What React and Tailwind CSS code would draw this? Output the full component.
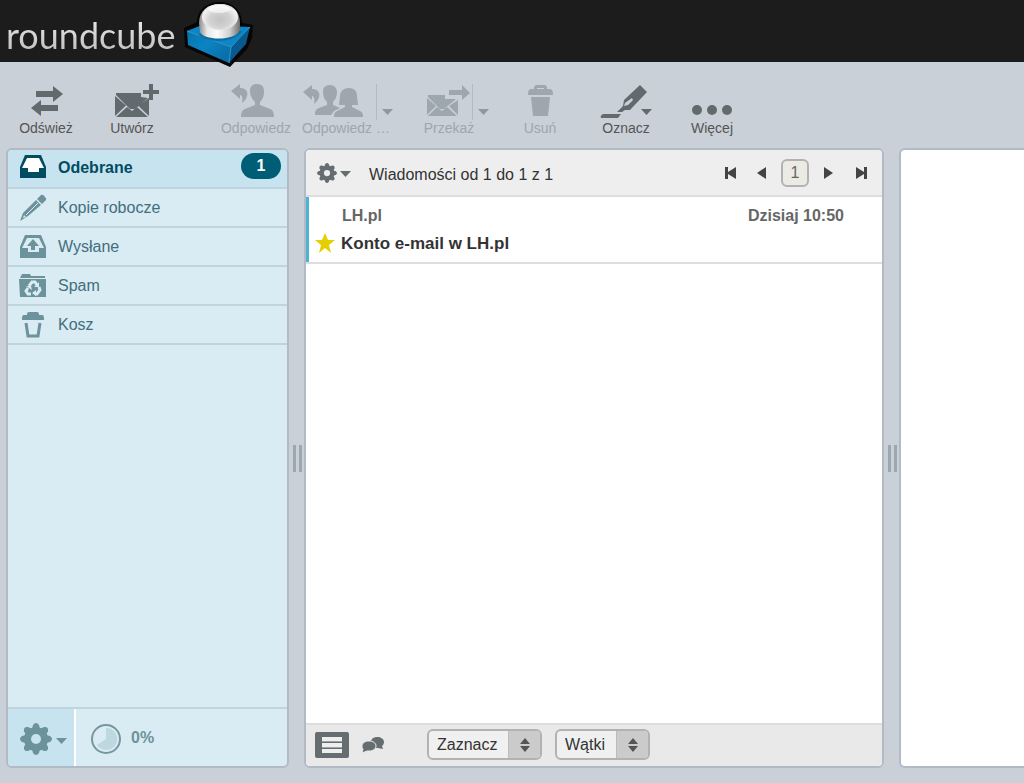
import { useState } from "react";

const folders = [
  { id: "inbox", name: "Odebrane", icon: InboxIcon, unread: 1 },
  { id: "drafts", name: "Kopie robocze", icon: PencilIcon },
  { id: "sent", name: "Wysłane", icon: SentIcon },
  { id: "junk", name: "Spam", icon: JunkIcon },
  { id: "trash", name: "Kosz", icon: TrashIcon },
];

const messages = [
  { id: 1, from: "LH.pl", subject: "Konto e-mail w LH.pl", date: "Dzisiaj 10:50", flagged: true },
];

/* Logo */
function CubeLogo() {
  return (
    <svg width="72" height="68" viewBox="184 0 72 68" aria-hidden="true">
      <defs>
        <linearGradient id="ring" x1="0" y1="0" x2="1" y2="0">
          <stop offset="0" stopColor="#8a8a8a" />
          <stop offset="0.2" stopColor="#e9e9e9" />
          <stop offset="0.45" stopColor="#fafafa" />
          <stop offset="0.75" stopColor="#cfcfcf" />
          <stop offset="1" stopColor="#6f6f6f" />
        </linearGradient>
        <radialGradient id="ball" cx="0.5" cy="0.6" r="0.6">
          <stop offset="0" stopColor="#c2c2c2" />
          <stop offset="0.5" stopColor="#d2d2d2" />
          <stop offset="0.85" stopColor="#f2f2f2" />
          <stop offset="1" stopColor="#dcdcdc" />
        </radialGradient>
        <linearGradient id="side" x1="0" y1="0" x2="1" y2="0.6">
          <stop offset="0" stopColor="#0873ad" />
          <stop offset="0.5" stopColor="#0b84c4" />
          <stop offset="1" stopColor="#0a6fab" />
        </linearGradient>
      </defs>
      <path
        d="M184 28 L197 22 C197 10 207 2 220 2 C233 2 242 11 242 23 L253 25 L252 38 L247 49 L230 67 L185 47 Z"
        fill="#050505"
      />
      <path d="M187 31 L202 25 L250 27 L231 47 Z" fill="#0d86c5" />
      <path d="M187 31 L231 47 L229 63 L188 45 Z" fill="url(#side)" />
      <path d="M231 47 L250 27 L246 44 L229 63 Z" fill="#08598d" />
      <path d="M187 31 L231 47 L250 27" fill="none" stroke="#3299cc" strokeWidth="1" />
      <path d="M231 47 L229 63" fill="none" stroke="#3299cc" strokeWidth="1" />
      <path d="M198 34 C204 43 234 44 242 31 Z" fill="#06517f" opacity="0.5" />
      <path
        d="M199 23 C199 11 208 4 220 4 C232 4 240 11 240 23 L240 30 C237 41 203 41 200 32 Z"
        fill="url(#ring)"
      />
      <ellipse cx="220" cy="17" rx="18" ry="13" fill="url(#ball)" />
      <ellipse cx="219" cy="9" rx="11" ry="4" fill="#ffffff" opacity="0.6" />
    </svg>
  );
}

/* Toolbar icons, all 34px high and aligned to the bottom */
function RefreshIcon() {
  return (
    <svg width="34" height="34" viewBox="0 0 34 34" fill="currentColor" aria-hidden="true">
      <path d="M7 7h17V2l10 8-10 8v-5H7z" />
      <path d="M29 21H12v-5L2 24l10 8v-5h17z" />
    </svg>
  );
}

function ComposeIcon() {
  return (
    <svg width="46" height="34" viewBox="0 0 46 34" fill="currentColor" aria-hidden="true">
      <path d="M2 9h25v4l7 1-13 11h-5L2 11z" />
      <path d="M1 12l11 9.500L1 32zM2 33l11-10 5 4 5-4 11 10zM35 14v18l-11-10.500z" />
      <path d="M35 0h4v6h6v4h-6v6h-4v-6h-6V6h6z" />
    </svg>
  );
}

function ReplyIcon() {
  return (
    <svg width="44" height="34" viewBox="0 0 44 34" fill="currentColor" aria-hidden="true">
      <path d="M0 7l9-7v4c9 0 10 9 2 15 1-5 0-8-2-8v4z" />
      <path d="M26 0c5 0 7 3 7 7 0 5-1 8-4 11v3l10 4c3 1 4 4 4 8H10c0-4 1-7 4-8l10-4v-3c-3-3-5-6-5-11 0-4 2-7 7-7z" />
    </svg>
  );
}

function ReplyAllIcon() {
  return (
    <svg width="62" height="34" viewBox="0 0 62 34" fill="currentColor" aria-hidden="true">
      <path d="M1 8l9-7v4c9 0 10 9 2 15 1-5 0-8-2-8v4z" />
      <path d="M28 1c4 0 7 3 7 7 0 5-2 8-4 10v3l7 3-6 3-3 4H13c0-4 1-6 4-7l8-3v-3c-2-2-4-5-4-10 0-4 2-7 7-7z" />
      <path d="M47 4c6 0 8 4 8 8l1 9h-6v2l8 4c2 1 3 2 3 6H32c0-4 1-5 3-6l8-4v-2h-6l1-9c0-4 3-8 9-8z" />
    </svg>
  );
}

function ForwardIcon() {
  return (
    <svg width="46" height="34" viewBox="0 0 46 34" fill="currentColor" aria-hidden="true">
      <path d="M2 11h17v4h11l-12 10h-4L2 13z" />
      <path d="M1 14l9 8-9 9zM2 32l9-9 5 4 5-4 10 9zM32 16v15l-9-9z" />
      <path d="M23 6h13V1l8 8-8 7v-5H23z" />
    </svg>
  );
}

function DeleteIcon() {
  return (
    <svg width="26" height="34" viewBox="0 0 26 34" fill="currentColor" aria-hidden="true">
      <path
        fillRule="evenodd"
        d="M7 4c0-2 1-3 3-3h7c2 0 3 1 3 3v1h3c2 0 3 2 3 6H1c0-4 1-6 3-6h3zM10 4v1h7V4z"
      />
      <path d="M4 13h19l-2 19H6z" />
    </svg>
  );
}

function MarkIcon() {
  return (
    <svg width="52" height="34" viewBox="0 0 52 34" fill="currentColor" aria-hidden="true">
      <path d="M3 30h18l-3 4H1c-1-1 0-3 2-4z" />
      <path fillRule="evenodd" d="M40 1l7 7-17 18h-5l-3 2h-5l6-6 1-6zM32 14l-7 5-1 3 4-1 5-5z" />
    </svg>
  );
}

function MoreIcon() {
  return (
    <svg width="42" height="34" viewBox="0 0 42 34" fill="currentColor" aria-hidden="true">
      <circle cx="6" cy="26" r="5" />
      <circle cx="21" cy="26" r="5" />
      <circle cx="36" cy="26" r="5" />
    </svg>
  );
}

function Caret() {
  return (
    <svg width="11" height="6" viewBox="0 0 11 6" fill="currentColor" aria-hidden="true">
      <path d="M0 0h11L5.500 6z" />
    </svg>
  );
}

/* Folder icons */
function InboxIcon() {
  return (
    <svg width="28" height="26" viewBox="0 0 28 26" aria-hidden="true">
      <path fill="currentColor" d="M6 0h16l5 12v11H1V12z" />
      <path fill="#ffffff" d="M8 3h12l5 10h-5v4H9v-4H3z" />
    </svg>
  );
}

function PencilIcon() {
  return (
    <svg width="28" height="28" viewBox="0 0 28 28" aria-hidden="true">
      <path fill="currentColor" d="M22 1q2-1 4 2 2 2 1 3l-4 4-5-5zM17 6l5 5L9 22 1 27l3-8z" />
      <path stroke="#d9ebf3" strokeWidth="1" fill="none" d="M19 9L7 21" />
      <path fill="#d9ebf3" d="M5 21l2 2-3 1z" />
    </svg>
  );
}

function SentIcon() {
  return (
    <svg width="28" height="26" viewBox="0 0 28 26" aria-hidden="true">
      <path fill="currentColor" d="M6 1h16l5 12v11H1V13z" />
      <path fill="#d9ebf3" d="M8 4h12l5 10h-5v4H9v-4H3z" />
      <path fill="currentColor" d="M14 5l6 7h-4v4h-4v-4H8z" />
    </svg>
  );
}

function JunkIcon() {
  return (
    <svg width="28" height="26" viewBox="0 0 28 26" aria-hidden="true">
      <path fill="currentColor" d="M1 5l2-4h8l1 2h14v2zM0 6h27v18H1z" />
      <g fill="none" stroke="#d9ebf3" strokeWidth="3">
        <path d="M10 13l3-4h3l2 3" />
        <path d="M20 14l1 3-3 4h-2" />
        <path d="M12 21H9l-2-3 2-3" />
      </g>
      <path fill="#d9ebf3" d="M20 9v5h-5zM17 17v6l-4-3zM7 13l5 0 1 4z" />
    </svg>
  );
}

function TrashIcon() {
  return (
    <svg width="28" height="28" viewBox="0 0 28 28" aria-hidden="true">
      <path fill="currentColor" d="M8 3q0-2 2-2h8q2 0 2 2v1h3c2 0 2 2 2 5H3c0-3 0-5 2-5h3z" />
      <path fill="none" stroke="currentColor" strokeWidth="3" d="M7 12l2 13h10l2-13" />
    </svg>
  );
}

function GearIcon({ size, hole }) {
  const teeth = [0, 45, 90, 135, 180, 225, 270, 315];
  return (
    <svg width={size} height={size} viewBox="0 0 32 32" aria-hidden="true">
      <g fill="currentColor">
        <circle cx="16" cy="16" r="12" />
        {teeth.map(a => (
          <path key={a} d="M12 6l1-4q3-4 6 0l1 4z" transform={`rotate(${a} 16 16)`} />
        ))}
      </g>
      <circle cx="16" cy="16" r="5" fill={hole} />
    </svg>
  );
}

function QuotaIcon() {
  return (
    <svg width="32" height="32" viewBox="0 0 32 32" aria-hidden="true">
      <circle cx="16" cy="16" r="14" fill="#d9ebf3" stroke="#77979f" strokeWidth="2" />
      <path d="M16 16V5a11 11 0 1 1-9 17z" fill="#bdd8e1" />
    </svg>
  );
}

function StarIcon() {
  return (
    <svg width="20" height="20" viewBox="0 0 20 20" fill="#e5cf00" aria-hidden="true">
      <path d="M10 0l3 7h7l-6 5 2 8-6-5-6 5 2-8-6-5h7z" />
    </svg>
  );
}

function ListIcon() {
  return (
    <svg width="36" height="26" viewBox="0 0 36 26" aria-hidden="true">
      <rect x="1" y="0" width="34" height="26" rx="2" fill="#666d70" />
      <path fill="#eeeeee" d="M8 5h20v4H8zM8 11h20v4H8zM8 17h20v4H8z" />
      <path fill="#9da2a4" d="M8 9h20v1H8zM8 15h20v1H8z" />
    </svg>
  );
}

function ThreadsIcon() {
  return (
    <svg width="22" height="18" viewBox="0 0 22 18" aria-hidden="true">
      <path fill="#666d70" d="M15 1c4 0 7 2 7 5 0 2-1 3-2 4l1 3-5-1H9L9 5c1-3 3-4 6-4z" />
      <path
        fill="#666d70"
        stroke="#e9e9e9"
        d="M7 5c4 0 7 2 7 5s-3 5-7 5l-2 0-5 2 1-4c-1-1-1-2-1-3 0-3 3-5 7-5z"
      />
    </svg>
  );
}

function ToolbarButton({ icon, label, disabled, className }) {
  return (
    <button
      disabled={disabled}
      className={`flex flex-col items-center text-sm leading-5 whitespace-nowrap text-[#636a6d] disabled:text-[#9ea6ae] ${className}`}
    >
      {icon}
      <span className={disabled ? "" : "text-[#555555]"}>{label}</span>
    </button>
  );
}

function MenuSelect({ label, options, width }) {
  return (
    <div className={`relative h-[31px] overflow-hidden rounded-md border-2 border-[#b2b2b2] bg-[#f0f0f0] ${width}`}>
      <select
        aria-label={label}
        className="h-full w-full appearance-none bg-transparent pl-2 text-base text-[#333333] outline-none"
      >
        {options.map(o => (
          <option key={o}>{o}</option>
        ))}
      </select>
      <span className="pointer-events-none absolute inset-y-0 right-0 flex w-8 items-center justify-center border-l border-[#bbbbbb] bg-[#cbcbcb] text-[#555555]">
        <svg width="12" height="16" viewBox="0 0 12 16" fill="currentColor" aria-hidden="true">
          <path d="M6 1l5 6H1zM1 9h10l-5 6z" />
        </svg>
      </span>
    </div>
  );
}

function Splitter() {
  return (
    <div className="flex w-[15px] shrink-0 cursor-col-resize items-center justify-center gap-[3px] pl-[2px]">
      <span className="h-[27px] w-[3px] bg-[#9da7ae]" />
      <span className="h-[27px] w-[3px] bg-[#9da7ae]" />
    </div>
  );
}

function PageButton({ label, d }) {
  return (
    <button aria-label={label} className="text-[#444444]">
      <svg width="12" height="14" viewBox="0 0 12 14" fill="currentColor" aria-hidden="true">
        <path d={d} />
      </svg>
    </button>
  );
}

export default function App() {
  const [folder, setFolder] = useState("inbox");
  const [page, setPage] = useState("1");

  return (
    <div className="flex min-h-screen flex-col overflow-x-hidden bg-[#c9d0d8] font-['Liberation_Sans',Arial,sans-serif]">
      {/* Header */}
      <header className="flex h-[62px] items-start bg-[#1c1c1c] pl-[6px]">
        <a href="#" className="flex items-start gap-2">
          <span className="bg-linear-to-b from-white to-[#bbbbbb] bg-clip-text pt-[14px] font-['Lato',sans-serif] text-[36px] leading-[42px] text-transparent">
            roundcube
          </span>
          <CubeLogo />
        </a>
      </header>

      {/* Toolbar */}
      <nav className="flex items-start pt-[22px] pb-[10px] pl-2">
        <ToolbarButton icon={<RefreshIcon />} label="Odśwież" className="w-[76px]" />
        <ToolbarButton icon={<span className="pl-[10px]"><ComposeIcon /></span>} label="Utwórz" className="w-24" />
        <ToolbarButton disabled icon={<span className="pr-[6px]"><ReplyIcon /></span>} label="Odpowiedz" className="ml-10 w-[72px]" />
        <div className="relative ml-2 w-24 pl-[2px]">
          <ToolbarButton
            disabled
            icon={<span className="self-start"><ReplyAllIcon /></span>}
            label="Odpowiedz …"
            className="w-[88px]"
          />
          <button
            disabled
            aria-label="Opcje odpowiedzi"
            className="absolute top-0 right-[3px] flex h-9 items-end border-l border-[#b4bac1] pb-[5px] pl-[5px] text-[#9099a0]"
          >
            <Caret />
          </button>
        </div>
        <div className="relative ml-7 w-[68px]">
          <ToolbarButton disabled icon={<ForwardIcon />} label="Przekaż" className="w-[50px]" />
          <button
            disabled
            aria-label="Opcje przekazywania"
            className="absolute top-0 right-[3px] flex h-9 items-end border-l border-[#b4bac1] pb-[5px] pl-[5px] text-[#9099a0]"
          >
            <Caret />
          </button>
        </div>
        <ToolbarButton disabled icon={<DeleteIcon />} label="Usuń" className="ml-[10px] w-[76px]" />
        <div className="relative ml-2 w-[90px]">
          <ToolbarButton icon={<MarkIcon />} label="Oznacz" className="w-[80px]" />
          <span className="absolute top-[25px] right-6 text-[#636a6d]">
            <Caret />
          </span>
        </div>
        <ToolbarButton icon={<MoreIcon />} label="Więcej" className="w-[72px]" />
      </nav>

      <main className="flex grow pb-[15px] pl-[6px]">
        {/* Folders */}
        <aside className="flex w-[283px] shrink-0 flex-col overflow-hidden rounded-md border-2 border-[#b2bbc5] bg-[#d9ebf3]">
          <ul className="grow">
            {folders.map(f => {
              const Icon = f.icon;
              const active = f.id === folder;
              return (
                <li key={f.id} className="border-b-2 border-[#bfd5de]">
                  <a
                    href={`#${f.id}`}
                    onClick={() => setFolder(f.id)}
                    className={`flex h-[37px] items-center pr-[6px] pl-[11px] text-base ${
                      active ? "bg-[#c7e3ef] pb-[2px] font-bold text-[#004c61]" : "text-[#436f7d]"
                    }`}
                  >
                    <span className={active ? "text-[#004c61]" : "text-[#6c929c]"}>
                      <Icon />
                    </span>
                    <span className="ml-[11px] grow">{f.name}</span>
                    {f.unread && (
                      <span className="mb-1 w-10 rounded-full bg-[#005d76] text-center leading-[26px] text-white">
                        {f.unread}
                      </span>
                    )}
                  </a>
                </li>
              );
            })}
          </ul>
          <div className="flex h-[59px] border-t-2 border-[#bfd5de]">
            <button
              aria-label="Działania na folderach"
              className="flex w-[68px] items-center gap-1 border-r-2 border-white bg-[#c7e3ef] pt-[2px] pl-3 text-[#6c929c]"
            >
              <GearIcon size={32} hole="#c7e3ef" />
              <span className="pt-1">
                <Caret />
              </span>
            </button>
            <div className="flex items-center gap-[9px] pl-[14px] text-base font-bold text-[#6c929c]">
              <span className="pt-[2px]">
                <QuotaIcon />
              </span>
              <span>0%</span>
            </div>
          </div>
        </aside>

        <Splitter />

        {/* Message list */}
        <section className="flex w-[580px] shrink-0 flex-col overflow-hidden rounded-md border-2 border-[#b2bbc5] bg-white">
          <div className="flex h-[47px] items-center border-b-2 border-[#dddddd] bg-[#eeeeee] pr-[15px] pl-[11px] text-base text-[#333333]">
            <button aria-label="Opcje listy" className="flex items-center gap-[3px] text-[#666d70]">
              <GearIcon size={20} hole="#eeeeee" />
              <span className="pt-[2px]">
                <Caret />
              </span>
            </button>
            <span className="grow pt-1 pl-[18px]">Wiadomości od 1 do 1 z 1</span>
            <div className="flex items-center">
              <div className="flex gap-[18px]">
                <PageButton label="Pierwsza strona" d="M0 1h3v5l8-5v12L3 8v5H0z" />
                <PageButton label="Poprzednia strona" d="M11 1v12L2 7z" />
              </div>
              <input
                aria-label="Strona"
                value={page}
                onChange={e => setPage(e.target.value)}
                className="mx-[14px] h-7 w-7 rounded-md border-2 border-[#b2b2b2] bg-[#ebebe3] text-center text-base text-[#666666]"
              />
              <div className="flex gap-[20px]">
                <PageButton label="Następna strona" d="M1 1v12l9-6z" />
                <PageButton label="Ostatnia strona" d="M12 1H9v5L1 1v12l8-5v5h3z" />
              </div>
            </div>
          </div>

          <ul className="grow">
            {messages.map(m => (
              <li key={m.id} className="border-b-2 border-[#dddddd]">
                <a href={`#${m.id}`} className="block border-l-[3px] border-[#4db3d2] pt-[7px] pb-1 pl-[6px]">
                  <div className="flex justify-between pr-[38px] pl-[27px] text-base font-bold text-[#666666]">
                    <span>{m.from}</span>
                    <span>{m.date}</span>
                  </div>
                  <div className="flex items-center gap-[6px] pt-[2px] text-[17px] leading-7 font-bold text-[#333333]">
                    {m.flagged && <span className="pb-[2px]"><StarIcon /></span>}
                    <span>{m.subject}</span>
                  </div>
                </a>
              </li>
            ))}
          </ul>

          <div className="flex h-[43px] items-center border-t-2 border-[#dddddd] bg-[#e9e9e9] pb-[2px] pl-2">
            <button aria-label="Lista">
              <ListIcon />
            </button>
            <button aria-label="Wątki" className="ml-3">
              <ThreadsIcon />
            </button>
            <div className="ml-[43px] flex gap-[13px]">
              <MenuSelect label="Zaznacz" options={["Zaznacz", "Wszystkie", "Nieprzeczytane"]} width="w-[115px]" />
              <MenuSelect label="Wątki" options={["Wątki", "Rozwiń wszystkie", "Zwiń wszystkie"]} width="w-[95px]" />
            </div>
          </div>
        </section>

        <Splitter />

        {/* Preview */}
        <section className="grow rounded-l-md border-2 border-r-0 border-[#b2bbc5] bg-white" />
      </main>
    </div>
  );
}
